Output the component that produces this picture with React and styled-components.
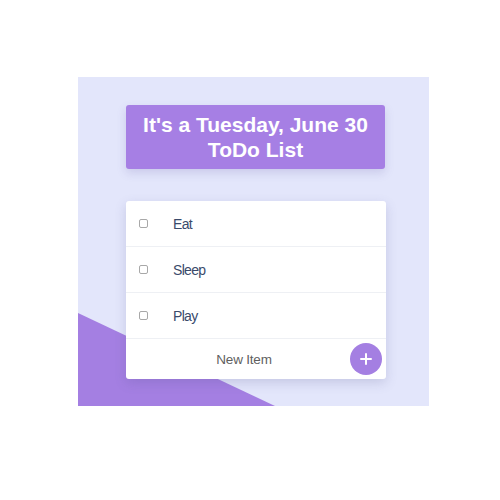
import React from 'react';
import styled, { createGlobalStyle } from 'styled-components';

const GlobalStyle = createGlobalStyle`
  html, body {
    margin: 0;
    padding: 0;
    background: #fff;
    font-family: "Liberation Sans", Arial, sans-serif;
  }
`;

const items = ['Eat', 'Sleep', 'Play'];

function App() {
  return (
    <>
      <GlobalStyle />
      <Page>
        <Panel>
          <Content>
            <Header>
              It's a Tuesday, June 30
              <br />
              ToDo List
            </Header>
            <Card>
              {items.map((item) => (
                <Row key={item}>
                  <Check />
                  <Label>{item}</Label>
                </Row>
              ))}
              <Footer>
                <NewItem>New Item</NewItem>
                <AddButton aria-label="add">
                  <svg width="12" height="12" viewBox="0 0 12 12">
                    <path d="M6 1v10M1 6h10" stroke="#fff" strokeWidth="2" strokeLinecap="round" />
                  </svg>
                </AddButton>
              </Footer>
            </Card>
          </Content>
        </Panel>
      </Page>
    </>
  );
}

const Page = styled.div`
  width: 500px;
  height: 500px;
  box-sizing: border-box;
  padding: 77px 71px 94px 78px;
`;

const Panel = styled.div`
  position: relative;
  width: 351px;
  height: 329px;
  background: #e3e6fb;
  overflow: hidden;

  &::before {
    content: '';
    position: absolute;
    inset: 0;
    background: #a47fe2;
    clip-path: polygon(0 236px, 197px 329px, 0 329px);
  }
`;

const Content = styled.div`
  position: relative;
  display: flex;
  flex-direction: column;
  gap: 32px;
  padding: 28px 0 0 48px;
`;

const Header = styled.div`
  width: 259px;
  height: 64px;
  box-sizing: border-box;
  display: flex;
  flex-direction: column;
  justify-content: center;
  align-items: center;
  text-align: center;
  background: #a67fe4;
  color: #fff;
  font-weight: bold;
  font-size: 21px;
  line-height: 25px;
  border-radius: 3px;
  box-shadow: 0 4px 10px rgba(90, 80, 160, 0.18);
`;

const Card = styled.div`
  width: 260px;
  background: #fff;
  border-radius: 3px;
  box-shadow: 0 4px 12px rgba(80, 80, 140, 0.2);
  display: flex;
  flex-direction: column;
`;

const Row = styled.div`
  display: flex;
  align-items: center;
  height: 46px;
  border-bottom: 1px solid #eef0f4;
  box-sizing: border-box;
  padding-left: 13px;
`;

const Check = styled.span`
  width: 7px;
  height: 7px;
  border: 1px solid #a8a8a8;
  border-radius: 2px;
  background: #fff;
`;

const Label = styled.span`
  margin-left: 25px;
  font-size: 14px;
  letter-spacing: -0.7px;
  color: #3a4a6b;
`;

const Footer = styled.div`
  display: flex;
  align-items: center;
  height: 40px;
  padding: 0 4px 0 12px;
`;

const NewItem = styled.span`
  flex: 1;
  text-align: center;
  font-size: 13.5px;
  letter-spacing: -0.2px;
  color: #5f5f5f;
`;

const AddButton = styled.button`
  width: 32px;
  height: 32px;
  border: none;
  border-radius: 50%;
  padding: 0;
  background: #a47fe2;
  display: flex;
  align-items: center;
  justify-content: center;
`;

export default App;
